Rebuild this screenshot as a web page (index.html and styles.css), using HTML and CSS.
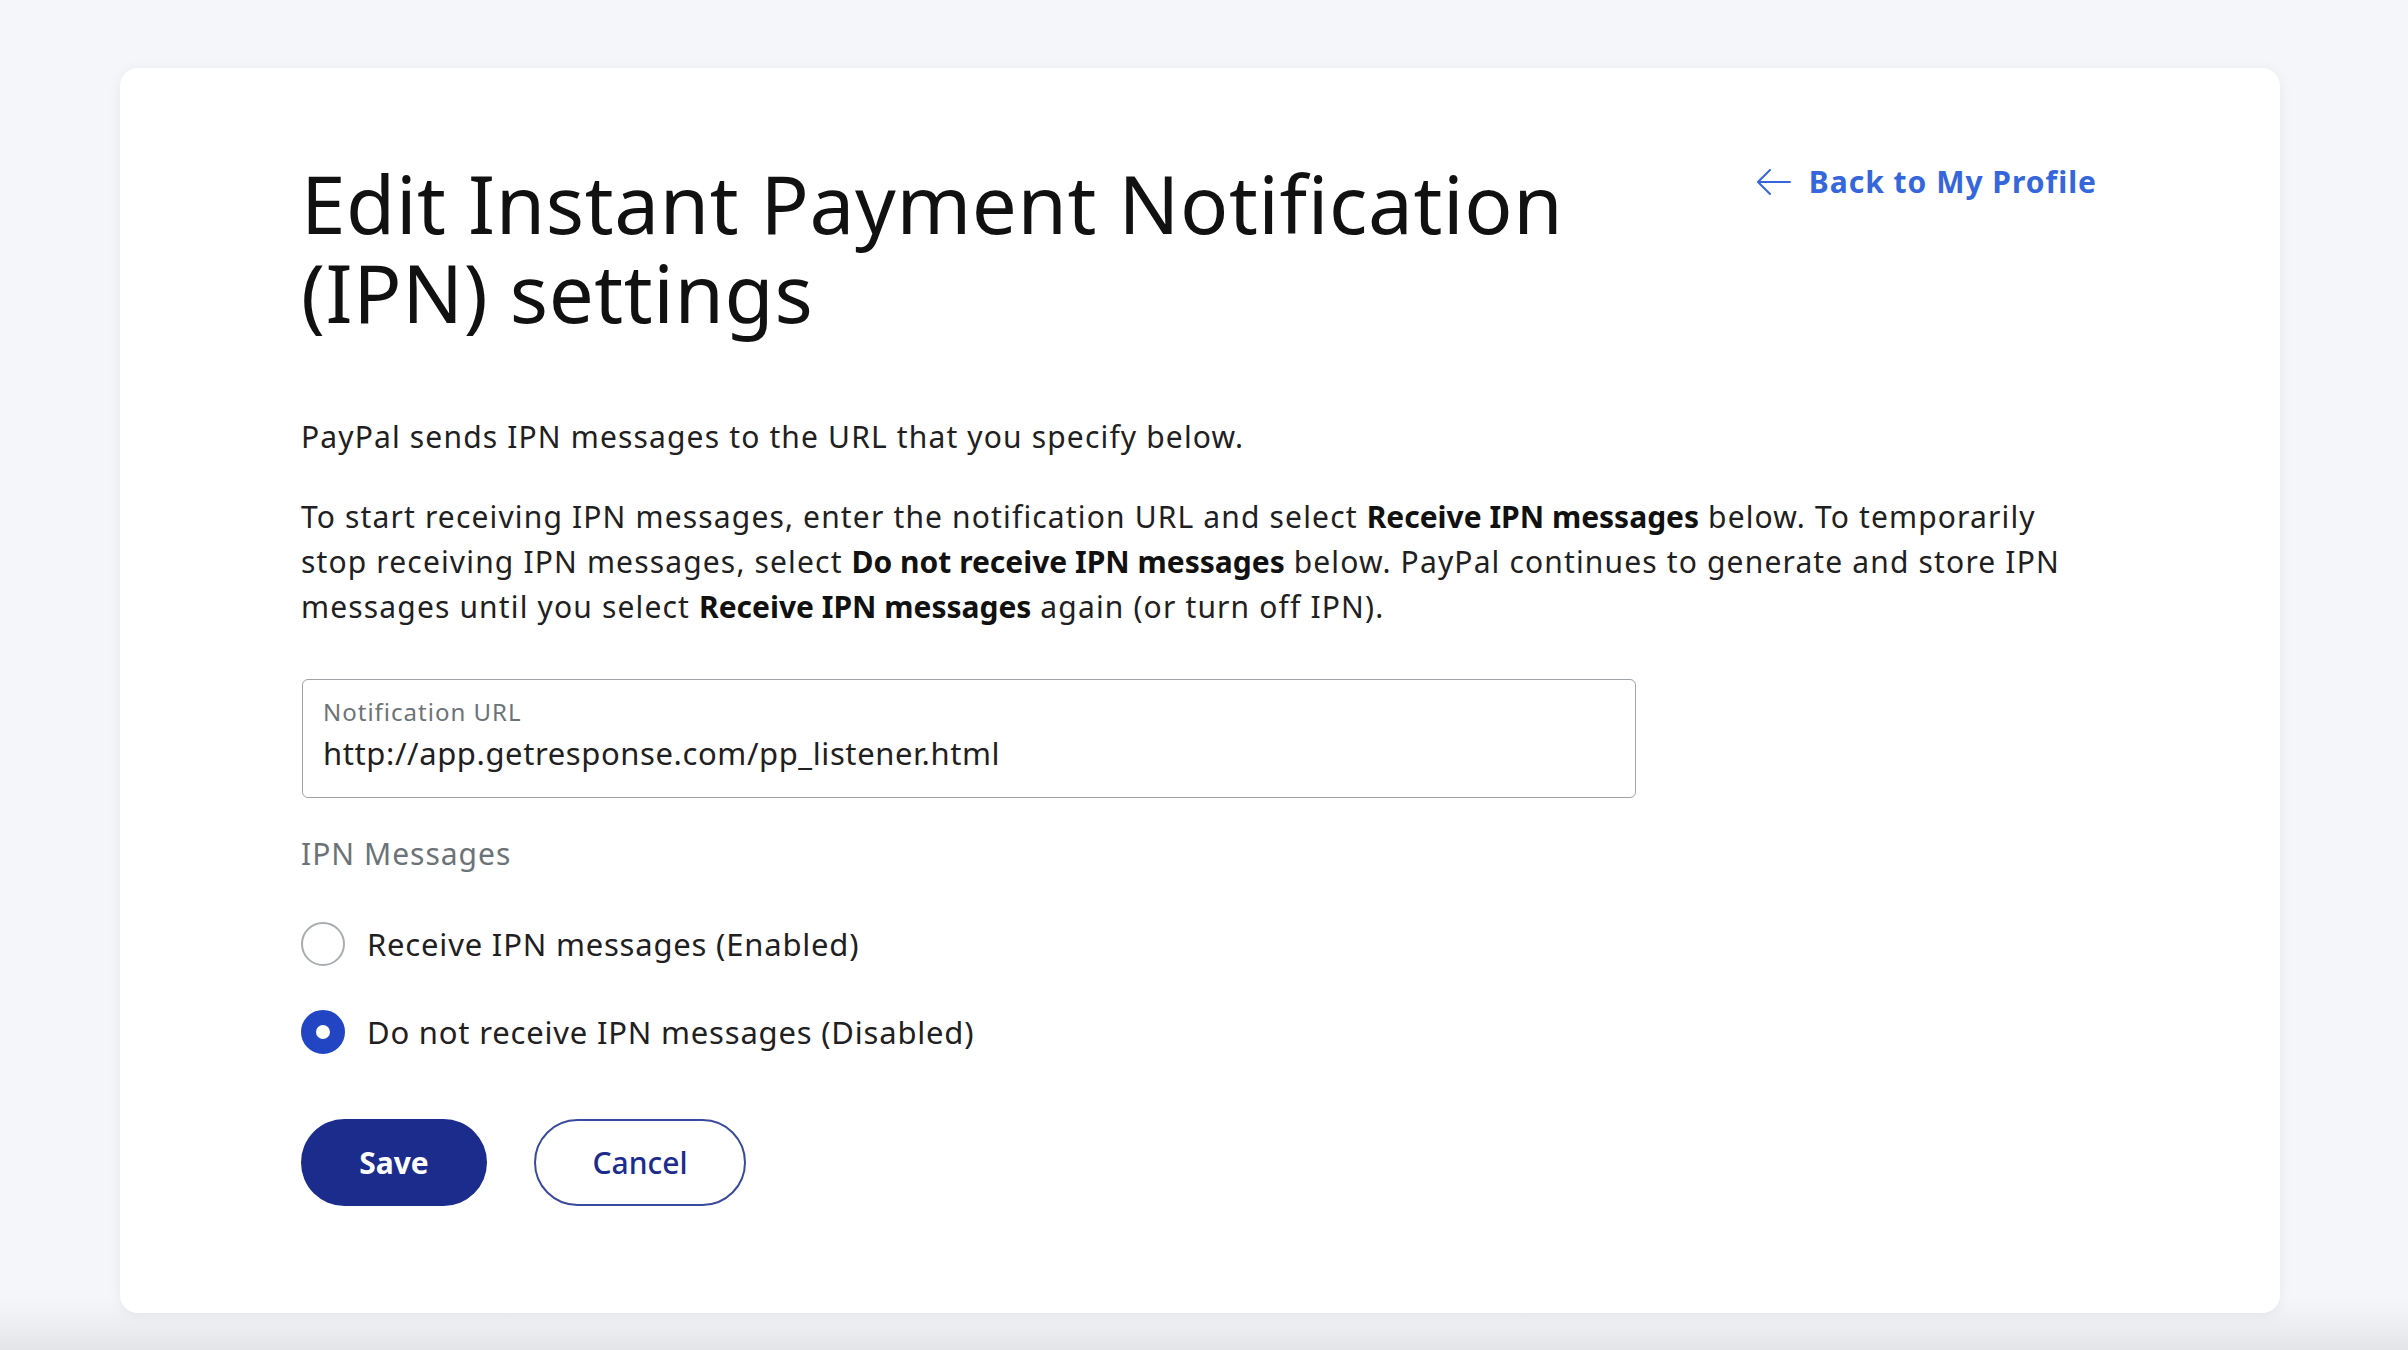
FILE: index.html
```html
<!DOCTYPE html>
<html lang="en">
<head>
    <meta charset="UTF-8">
    <meta name="viewport" content="width=device-width, initial-scale=1.0">
    <title>Edit Instant Payment Notification (IPN) settings</title>
    <link rel="stylesheet" href="styles.css">
</head>
<body>
    <div class="card">
        <div class="header">
            <h1>Edit Instant Payment Notification (IPN) settings</h1>
            <a class="back-link" href="#">
                <svg class="back-arrow" viewBox="0 0 36 28" width="36" height="28" aria-hidden="true">
                    <path d="M34 14H3M14 2L2 14l12 12" fill="none" stroke="currentColor" stroke-width="2" stroke-linecap="round" stroke-linejoin="round"/>
                </svg>
                <span>Back to My Profile</span>
            </a>
        </div>

        <p class="intro">PayPal sends IPN messages to the URL that you specify below.</p>
        <p class="intro">To start receiving IPN messages, enter the notification URL and select <b>Receive IPN messages</b> below. To temporarily stop receiving IPN messages, select <b>Do not receive IPN messages</b> below. PayPal continues to generate and store IPN messages until you select <b>Receive IPN messages</b> again (or turn off IPN).</p>

        <div class="field">
            <label for="notify-url">Notification URL</label>
            <input type="text" id="notify-url" value="http://app.getresponse.com/pp_listener.html">
        </div>

        <div class="group-label">IPN Messages</div>

        <label class="radio-row">
            <input type="radio" name="ipn" value="on">
            <span>Receive IPN messages (Enabled)</span>
        </label>
        <label class="radio-row">
            <input type="radio" name="ipn" value="off" checked>
            <span>Do not receive IPN messages (Disabled)</span>
        </label>

        <div class="actions">
            <button class="btn btn-primary" type="button">Save</button>
            <button class="btn btn-secondary" type="button">Cancel</button>
        </div>
    </div>
</body>
</html>
```

FILE: styles.css
```css
body {
    font-family: "Noto Sans", "Open Sans", Arial, sans-serif;
    margin: 0;
    min-height: 100vh;
    color: #1f2021;
    background: linear-gradient(to bottom, #f5f6fa 0, #f5f6fa 1300px, #e4e5e8 1350px);
    padding: 68px 0 0 120px;
    box-sizing: border-box;
}
.card {
    width: 2160px;
    height: 1245px;
    box-sizing: border-box;
    background-color: white;
    border-radius: 18px;
    box-shadow: 0 2px 14px rgba(0,0,0,0.06);
    padding: 90px 183px 0 181px;
}
.header {
    display: flex;
    justify-content: space-between;
    align-items: flex-start;
}
h1 {
    margin: 0;
    max-width: 1400px;
    font-size: 80px;
    line-height: 89px;
    letter-spacing: 0.6px;
    font-weight: 400;
    color: #111;
}
.back-link {
    display: flex;
    align-items: center;
    gap: 17px;
    margin-top: 3px;
    color: #3566db;
    text-decoration: none;
    font-size: 30px;
    letter-spacing: 1px;
    font-weight: 700;
}
.back-arrow {
    width: 36px;
    height: 28px;
}
.intro {
    margin: 35px 0 0;
    font-size: 30px;
    line-height: 45px;
    letter-spacing: 1.15px;
}
.header + .intro {
    margin-top: 78px;
}
.intro b {
    font-weight: 700;
    letter-spacing: 0;
    color: #111;
}
.field {
    margin-top: 50px;
    margin-left: 1px;
    width: 1334px;
    height: 119px;
    box-sizing: border-box;
    border: 1.5px solid #9da3a6;
    border-radius: 6px;
    padding: 17px 20px 0;
    display: flex;
    flex-direction: column;
}
.field label {
    font-size: 24px;
    line-height: 30px;
    letter-spacing: 1px;
    color: #6c7378;
}
.field input {
    border: none;
    outline: none;
    padding: 0;
    margin-top: 4px;
    font-family: inherit;
    font-size: 31px;
    line-height: 44px;
    letter-spacing: 0.6px;
    color: #1f2021;
}
.group-label {
    margin-top: 36px;
    font-size: 30px;
    line-height: 40px;
    letter-spacing: 1px;
    color: #6c7378;
}
.radio-row {
    display: flex;
    align-items: center;
    gap: 22px;
    height: 46px;
    margin-top: 42px;
    font-size: 31px;
    letter-spacing: 0.8px;
    color: #1f2021;
}
.group-label + .radio-row {
    margin-top: 47px;
}
.radio-row input {
    appearance: none;
    -webkit-appearance: none;
    margin: 0;
    width: 44px;
    height: 44px;
    border: 2px solid #a9adb0;
    border-radius: 50%;
    box-sizing: border-box;
    background: white;
}
.radio-row input:checked {
    border: 15px solid #2245c4;
}
.actions {
    display: flex;
    gap: 47px;
    margin-top: 64px;
}
.btn {
    height: 87px;
    border-radius: 44px;
    font-family: inherit;
    font-size: 30px;
    cursor: pointer;
}
.btn-primary {
    width: 186px;
    background-color: #1c2c8c;
    border: none;
    color: white;
    font-weight: 700;
}
.btn-secondary {
    width: 212px;
    background-color: white;
    border: 2px solid #3a4a9c;
    color: #1c2c8c;
    font-weight: 500;
}
```
